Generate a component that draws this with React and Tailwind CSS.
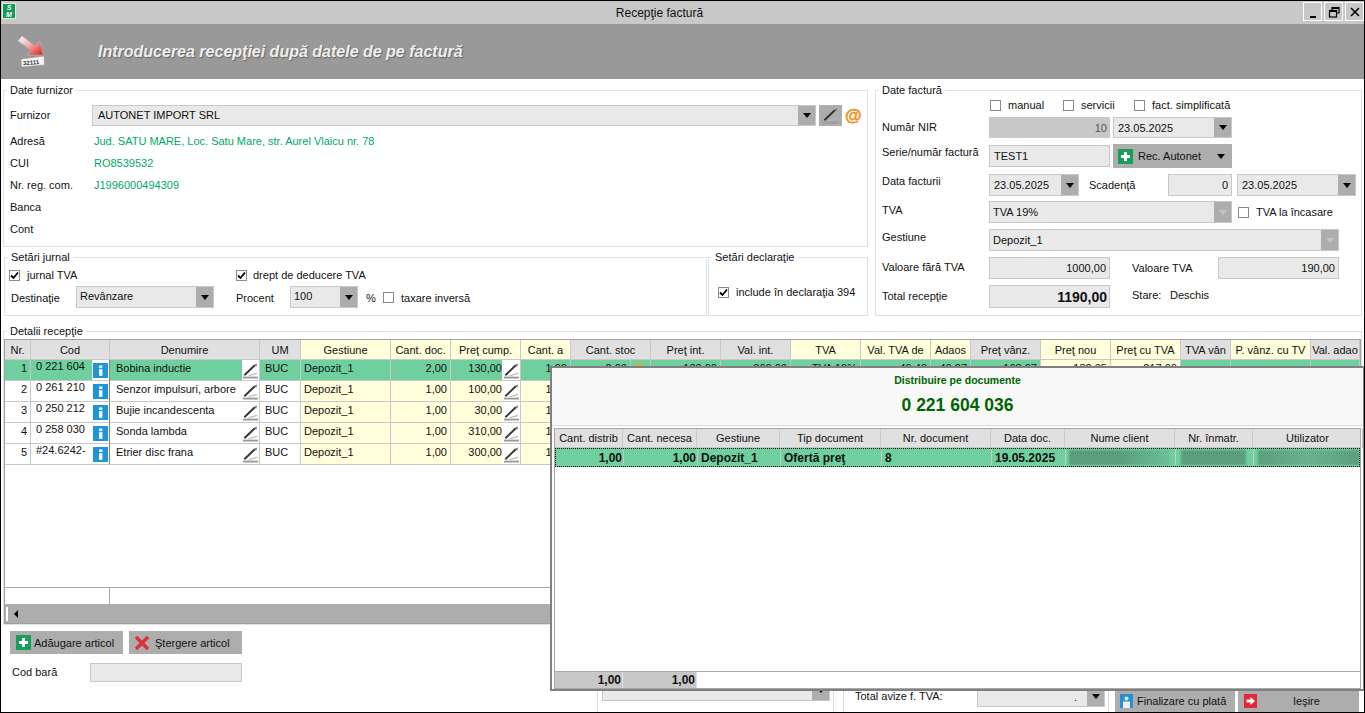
import React from "react";

const Tri = ({ muted }) => (
  <span className={`w-0 h-0 border-x-[4px] border-t-[5px] border-x-transparent ${muted ? "border-t-[#c4c4c4]" : "border-t-black"}`} />
);

const Combo = ({ className = "", text, muted, btn = "w-[17px]" }) => (
  <div className={`flex items-stretch bg-[#e9e9e9] border border-[#c8c8c8] shrink-0 ${className}`}>
    <span className="flex-1 pl-[3px] flex items-center whitespace-nowrap overflow-hidden">{text}</span>
    <span className={`bg-[#adadad] flex items-center justify-center shrink-0 ${btn}`}><Tri muted={muted} /></span>
  </div>
);

const Box = ({ className = "", children }) => (
  <div className={`flex items-center border border-[#c8c8c8] shrink-0 whitespace-nowrap ${className}`}>{children}</div>
);

const Check = ({ checked }) => (
  <span className="w-[11px] h-[11px] shrink-0 border border-[#8a8a8a] bg-white flex items-center justify-center">
    {checked && (
      <svg width="9" height="9" viewBox="0 0 9 9"><path d="M1 4.5 L3.5 7 L8 1.5" fill="none" stroke="#000" strokeWidth="1.8" /></svg>
    )}
  </span>
);

const Group = ({ title, className = "", children }) => (
  <fieldset className={`border border-[#dce3e8] ${className}`}>
    <legend className="ml-[3px] px-[3px] h-[14px] leading-[14px]">{title}</legend>
    {children}
  </fieldset>
);

const Pen = ({ size = 18 }) => (
  <svg width={size} height={size} viewBox="0 0 18 18">
    <path d="M2.5 14 L13.5 3.5" stroke="#333" strokeWidth="2" fill="none" />
    <path d="M13 3 L16 1.5 L15 5 Z" fill="#666" />
    <path d="M1 16.5 H17" stroke="#9a9a9a" strokeWidth="2" />
    <path d="M7 14.5 L16 12" stroke="#b8b8b8" strokeWidth="1.2" />
  </svg>
);

const Info = () => (
  <svg width="15" height="15" viewBox="0 0 15 15" className="shrink-0">
    <rect width="15" height="15" fill="#1c96d8" />
    <rect x="6" y="2.5" width="3.4" height="2.6" fill="#fff" />
    <rect x="6" y="6.2" width="3.4" height="6.6" fill="#fff" />
  </svg>
);

const Plus = () => (
  <svg width="15" height="15" viewBox="0 0 15 15" className="shrink-0">
    <rect width="15" height="15" fill="#17a05a" />
    <path d="M6 3h3v3h3v3H9v3H6V9H3V6h3z" fill="#fff" />
  </svg>
);

const COLS = "grid grid-cols-[26px_79px_150px_41px_90px_60px_70px_50px_80px_70px_70px_70px_70px_40px_70px_70px_70px_50px_80px_49px]";
const POPCOLS = "grid grid-cols-[68px_74px_83px_101px_110px_74px_110px_78px_110px]";

const heads = [
  ["Nr.", 0], ["Cod", 0], ["Denumire", 0], ["UM", 0], ["Gestiune", 1], ["Cant. doc.", 1], ["Preţ cump.", 1], ["Cant. a", 1],
  ["Cant. stoc", 0], ["Preţ int.", 0], ["Val. int.", 0], ["TVA", 1], ["Val. TVA de", 1], ["Adaos", 1], ["Preţ vânz.", 0],
  ["Preţ nou", 1], ["Preţ cu TVA", 1], ["TVA vân", 0], ["P. vânz. cu TV", 1], ["Val. adao", 0],
];

const rows = [
  ["1", "0 221 604", "Bobina inductie", "2,00", "130,00", "1,00"],
  ["2", "0 261 210", "Senzor impulsuri, arbore", "1,00", "100,00", "1,00"],
  ["3", "0 250 212", "Bujie incandescenta", "1,00", "30,00", "1,00"],
  ["4", "0 258 030", "Sonda lambda", "1,00", "310,00", "1,00"],
  ["5", "#24.6242-", "Etrier disc frana", "1,00", "300,00", "1,00"],
];

const cellLine = "border-r border-b border-[#c8c8c8] h-[21px] flex items-center whitespace-nowrap overflow-hidden";

const Row = ({ r, sel }) => {
  const white = sel ? "bg-[#6fcf9f]" : "bg-white";
  const cream = sel ? "bg-[#6fcf9f]" : "bg-[#ffffdc]";
  const tail = sel
    ? [["2,00", 0], ["130,00", 0], ["260,00", 0], ["TVA 19%", 0], ["49,40", 0], ["40,27", 0], ["168,97", 0], ["182,35", 1], ["217,00", 1], ["", 0], ["", 0], ["", 0]]
    : Array(12).fill(["", 0]);
  return (
    <div className={COLS}>
      <div className={`${cellLine} ${white} justify-end pr-[3px] pb-[4px]`}>{r[0]}</div>
      <div className={`${cellLine} ${white} border-r-[#808080] justify-between`}>
        <span className="pl-[5px] pb-[8px]">{r[1]}</span>
        <span className="bg-white h-full w-[17px] flex items-center justify-center"><Info /></span>
      </div>
      <div className={`${cellLine} ${white} justify-between pl-[6px]`}>
        <span className="pb-[5px]">{r[2]}</span>
        <span className="bg-white h-full w-[17px] flex items-center justify-center shrink-0"><Pen size={17} /></span>
      </div>
      <div className={`${cellLine} ${white} pl-[5px] pb-[4px]`}>BUC</div>
      <div className={`${cellLine} ${cream} pl-[3px] pb-[4px]`}>Depozit_1</div>
      <div className={`${cellLine} ${cream} justify-end pr-[3px] pb-[4px]`}>{r[3]}</div>
      <div className={`${cellLine} ${cream} justify-end`}>
        <span className="pb-[4px]">{r[4]}</span>
        <span className="bg-white h-full w-[18px] flex items-center justify-center shrink-0"><Pen size={17} /></span>
      </div>
      <div className={`${cellLine} ${cream} justify-end pr-[3px] pb-[4px]`}>{r[5]}</div>
      {tail.map((t, i) =>
        i === 0 ? (
          <div key={i} className={`${cellLine} ${white} justify-end`}>
            <span className="pb-[4px] pr-[3px]">{t[0]}</span>
            <span className="w-[20px] h-full border-l border-[#c8c8c8] shrink-0 flex items-start pt-[3px] pl-[3px]">
              {sel && <span className="w-[10px] h-[10px] rounded-full border-2 border-[#e8a820]" />}
            </span>
          </div>
        ) : (
          <div key={i} className={`${cellLine} ${t[1] ? "bg-[#ffffdc]" : i === 4 || i === 3 ? cream : white} justify-end pr-[3px] pb-[4px] ${i === 3 ? "justify-center" : ""}`}>{t[0]}</div>
        )
      )}
    </div>
  );
};

const Popup = () => (
  <div className="absolute left-[549px] top-[365px] w-[815px] h-[325px] bg-white border-2 border-[#808080] flex flex-col">
    <div className="h-[58px] bg-[#f8f8f8] border-b border-[#dcdcdc] flex flex-col items-center text-[#006400] font-bold shrink-0">
      <span className="text-[10.5px] leading-[12px] mt-[6px]">Distribuire pe documente</span>
      <span className="text-[17.5px] leading-[18px] mt-[10px]">0 221 604 036</span>
    </div>
    <div className="mx-[2px] mt-[2px] flex-1 flex flex-col border border-[#a8a8a8]">
      <div className={`${POPCOLS} bg-[#e0e0e0]`}>
        {["Cant. distrib", "Cant. necesa", "Gestiune", "Tip document", "Nr. document", "Data doc.", "Nume client", "Nr. înmatr.", "Utilizator"].map((h) => (
          <div key={h} className="h-[19px] border-r border-b border-[#c8c8c8] flex items-center justify-center whitespace-nowrap overflow-hidden">{h}</div>
        ))}
      </div>
      <div className={`${POPCOLS} bg-[#6fcf9f] border border-dotted border-black font-bold text-[12px] h-[19px]`}>
        <div className="flex items-center justify-end pr-[1px] border-r border-[#c8c8c8]">1,00</div>
        <div className="flex items-center justify-end pr-[1px] border-r border-[#c8c8c8]">1,00</div>
        <div className="flex items-center pl-[3px] border-r border-[#c8c8c8]">Depozit_1</div>
        <div className="flex items-center pl-[3px] border-r border-[#c8c8c8]">Ofertă preţ</div>
        <div className="flex items-center pl-[3px] border-r border-[#c8c8c8]">8</div>
        <div className="flex items-center pl-[3px] border-r border-[#c8c8c8]">19.05.2025</div>
        <div className="p-[1px] border-r border-[#c8c8c8] overflow-hidden"><div className="h-full bg-gradient-to-r from-[#5b9e7c] via-[#5b9e7c] to-[#6cc098] ml-[2px] mr-[4px] blur-[1px]" /></div>
        <div className="p-[1px] border-r border-[#c8c8c8] overflow-hidden"><div className="h-full bg-[#5b9e7c] ml-[4px] mr-[6px] blur-[1px]" /></div>
        <div className="p-[1px] overflow-hidden"><div className="h-full bg-gradient-to-r from-[#5b9e7c] via-[#68b28e] to-[#5b9e7c] ml-[3px] mr-[4px] blur-[1px]" /></div>
      </div>
      <div className="flex-1 bg-white" />
      <div className="flex h-[17px] border-t border-[#a8a8a8] font-bold text-[12px]">
        <div className="w-[68px] bg-[#c8c8c8] border-r border-[#e0e0e0] flex items-center justify-end pr-[1px]">1,00</div>
        <div className="w-[74px] bg-[#c8c8c8] border-r border-[#e0e0e0] flex items-center justify-end pr-[1px]">1,00</div>
        <div className="flex-1 bg-white" />
      </div>
    </div>
  </div>
);

export default function App() {
  return (
    <div className="relative w-[1365px] h-[713px] border border-black bg-white overflow-hidden flex flex-col text-[11px] leading-[14px] text-[#111] [font-family:Liberation_Sans,Arial,sans-serif]">
      {/* Title bar */}
      <div className="h-[23px] bg-[#c8c8c8] flex shrink-0">
        <div className="w-[14px] h-[16px] ml-[1px] mt-[2px] bg-[#16995a] border border-[#d8f0e0] text-white font-bold italic text-[7px] leading-[7px] flex flex-col items-center justify-center">
          <span>S</span><span>M</span>
        </div>
        <div className="flex-1 text-center text-[12px] leading-[24px]">Recepţie factură</div>
        <div className="flex gap-[2px] mt-[1px] h-[19px]">
          {[
            <path key="a" d="M5 13 H11" stroke="#000" strokeWidth="2" />,
            <g key="b" fill="none" stroke="#000" strokeWidth="1.2"><path d="M6 6 V3.5 H13 V9 H10.5" /><rect x="3.5" y="6.5" width="7" height="6.5" /><path d="M3.5 7.5 H10.5 M6 4.5 H13" /></g>,
            <path key="c" d="M4 4 L12 12 M12 4 L4 12" stroke="#000" strokeWidth="1.6" fill="none" />,
          ].map((p, i) => (
            <div key={i} className="w-[19px] h-[19px] border border-white bg-[#c8c8c8] flex items-center justify-center">
              <svg width="16" height="16" viewBox="0 0 16 16">{p}</svg>
            </div>
          ))}
        </div>
      </div>

      {/* Header */}
      <div className="h-[55px] bg-[#999999] flex items-center shrink-0">
        <svg width="32" height="34" viewBox="0 0 32 34" className="ml-[15px] shrink-0">
          <defs>
            <linearGradient id="arw" x1="0" y1="0" x2="1" y2="1">
              <stop offset="0" stopColor="#ffffff" />
              <stop offset="0.45" stopColor="#f4b0b0" />
              <stop offset="1" stopColor="#e01818" />
            </linearGradient>
          </defs>
          <path d="M2 6 L6 1 L19 11 L24 6 L27 20 L11 20 L15 15 Z" fill="url(#arw)" stroke="#b8b8b8" strokeWidth="0.5" />
          <path d="M5 24 L28 21 L28.5 30 L5.5 32 Z" fill="#f4f4f4" stroke="#888" strokeWidth="0.5" />
          <text x="7" y="29.5" fontSize="6" fontWeight="700" fill="#333" transform="rotate(-5 16 27)">32111</text>
        </svg>
        <span className="ml-[50px] text-[16px] leading-[20px] font-bold italic text-[#eeeeee] whitespace-nowrap [text-shadow:1px_1px_1px_#666]">Introducerea recepţiei după datele de pe factură</span>
      </div>

      {/* Upper forms */}
      <div className="flex pl-[2px] shrink-0">
        <div className="w-[865px] shrink-0 pt-[4px]">
          <Group title="Date furnizor" className="h-[164px]">
            <div className="pl-[6px] pt-[8px]">
              <div className="flex items-center h-[21px] mb-[4px]">
                <span className="w-[82px] pb-[2px]">Furnizor</span>
                <Combo className="w-[724px] h-[21px]" text={<span className="pl-[2px] pb-[2px]">AUTONET IMPORT SRL</span>} />
                <span className="ml-[3px] w-[23px] h-[21px] bg-[#adadad] flex items-center justify-center"><Pen size={17} /></span>
                <span className="ml-[3px] text-[#f09020] font-bold text-[17px] leading-[20px] [-webkit-text-stroke:0.5px_#f09020]">@</span>
              </div>
              {[
                ["Adresă", "Jud. SATU MARE, Loc. Satu Mare, str. Aurel Vlaicu nr. 78"],
                ["CUI", "RO8539532"],
                ["Nr. reg. com.", "J1996000494309"],
                ["Banca", ""],
                ["Cont", ""],
              ].map(([a, b]) => (
                <div key={a} className="flex items-center h-[22px]">
                  <span className="w-[84px]">{a}</span>
                  <span className="text-[#00a868]">{b}</span>
                </div>
              ))}
            </div>
          </Group>
          <div className="flex mt-[3px] pl-[1px]">
            <Group title="Setări jurnal" className="w-[703px] h-[66px] shrink-0">
              <div className="pl-[4px] pt-[5px]">
                <div className="flex items-center h-[12px]">
                  <span className="w-[227px] flex items-center gap-[7px]"><Check checked />jurnal TVA</span>
                  <span className="flex items-center gap-[6px]"><Check checked />drept de deducere TVA</span>
                </div>
                <div className="flex items-center h-[22px] mt-[5px] pl-[2px]">
                  <span className="w-[65px] shrink-0 pt-[2px]">Destinaţie</span>
                  <Combo className="w-[138px] h-[22px]" text={<span className="pb-[3px]">Revânzare</span>} />
                  <span className="ml-[22px] w-[54px] shrink-0 pt-[2px]">Procent</span>
                  <Combo className="w-[68px] h-[22px]" text={<span className="pb-[3px]">100</span>} />
                  <span className="ml-[8px] w-[17px] shrink-0 pt-[2px]">%</span>
                  <Check />
                  <span className="ml-[7px] pt-[2px]">taxare inversă</span>
                </div>
              </div>
            </Group>
            <Group title="Setări declaraţie" className="w-[160px] ml-[1px] h-[66px] shrink-0">
              <div className="pl-[9px] pt-[21px] flex items-center gap-[7px] whitespace-nowrap"><Check checked />include în declaraţia 394</div>
            </Group>
          </div>
        </div>

        <div className="ml-[7px] w-[487px] shrink-0 pt-[4px]">
          <Group title="Date factură" className="h-[233px]">
            <div className="pl-[6px] pt-[2px] flex flex-col gap-[6px]">
              <div className="flex items-center h-[12px] pl-[108px]">
                <Check /><span className="ml-[7px] w-[55px]">manual</span>
                <Check /><span className="ml-[7px] w-[53px]">servicii</span>
                <Check /><span className="ml-[7px]">fact. simplificată</span>
              </div>
              <div className="flex items-center h-[21px]">
                <span className="w-[107px] pb-[2px]">Număr NIR</span>
                <Box className="w-[121px] h-[21px] bg-[#c8c8c8] justify-end pr-[2px] text-[#555]">10</Box>
                <Combo className="w-[119px] h-[21px] ml-[3px]" text={<span className="pl-[1px]">23.05.2025</span>} />
              </div>
              <div className="flex items-center h-[24px]">
                <span className="w-[107px] pb-[8px]">Serie/număr factură</span>
                <Box className="w-[121px] h-[22px] bg-[#e9e9e9] pl-[4px]">TEST1</Box>
                <div className="ml-[3px] w-[119px] h-[24px] bg-[#adadad] flex items-center pl-[5px]">
                  <Plus />
                  <span className="ml-[5px] w-[79px]">Rec. Autonet</span>
                  <Tri />
                </div>
              </div>
              <div className="flex items-center h-[22px]">
                <span className="w-[107px] pb-[9px]">Data facturii</span>
                <Combo className="w-[90px] h-[22px]" text={<span className="pl-[1px]">23.05.2025</span>} />
                <span className="ml-[10px] w-[79px]">Scadenţă</span>
                <Box className="w-[64px] h-[22px] bg-[#e9e9e9] justify-end pr-[3px]">0</Box>
                <Combo className="w-[119px] h-[22px] ml-[5px]" text={<span className="pl-[1px]">23.05.2025</span>} />
              </div>
              <div className="flex items-center h-[22px] -mt-px">
                <span className="w-[107px] pb-[4px]">TVA</span>
                <Combo className="w-[243px] h-[22px]" muted text="TVA 19%" />
                <span className="ml-[6px]"><Check /></span>
                <span className="ml-[7px] pb-[1px]">TVA la încasare</span>
              </div>
              <div className="flex items-center h-[22px]">
                <span className="w-[107px] pb-[7px]">Gestiune</span>
                <Combo className="w-[350px] h-[22px]" muted text="Depozit_1" />
              </div>
              <div className="flex items-center h-[22px]">
                <span className="w-[107px] pb-[2px]">Valoare fără TVA</span>
                <Box className="w-[121px] h-[22px] bg-[#e9e9e9] justify-end pr-[3px]">1000,00</Box>
                <span className="ml-[22px] w-[86px]">Valoare TVA</span>
                <Box className="w-[121px] h-[22px] bg-[#e9e9e9] justify-end pr-[3px]">190,00</Box>
              </div>
              <div className="flex items-center h-[23px]">
                <span className="w-[107px] pb-[2px]">Total recepţie</span>
                <Box className="w-[121px] h-[23px] bg-[#e9e9e9] justify-end pr-[2px] font-bold text-[14px]">1190,00</Box>
                <span className="ml-[22px] w-[38px] pb-[3px]">Stare:</span>
                <span className="pb-[3px]">Deschis</span>
              </div>
            </div>
          </Group>
        </div>
      </div>

      {/* Details grid */}
      <div className="pl-[2px] pt-[8px] shrink-0">
        <Group title="Detalii recepţie" className="w-[1359px] h-[301px]">
          <div className="mt-[1px] w-[1357px] h-[285px] border border-[#a0a0a0] flex flex-col overflow-hidden">
            <div className={COLS}>
              {heads.map(([h, c]) => (
                <div key={h} className={`h-[20px] border-r border-b border-[#c8c8c8] flex items-center justify-center whitespace-nowrap overflow-hidden ${c ? "bg-[#ffffdc]" : "bg-[#e0e0e0]"}`}>{h}</div>
              ))}
            </div>
            {rows.map((r, i) => <Row key={r[0]} r={r} sel={i === 0} />)}
            <div className="flex-1 bg-white" />
            <div className="flex h-[17px] border-t border-[#a8a8a8] shrink-0">
              <div className="w-[105px] border-r border-[#a8a8a8]" />
            </div>
            <div className="h-[19px] bg-[#adadad] flex items-center shrink-0">
              <span className="w-[2px] h-[14px] bg-white ml-[1px]" />
              <span className="ml-[6px] w-0 h-0 border-y-[4px] border-r-[4px] border-y-transparent border-r-black" />
            </div>
          </div>
        </Group>
      </div>

      {/* Bottom */}
      <div className="flex-1 flex min-h-0">
        <div className="w-[596px] shrink-0 pl-[9px] pt-[6px]">
          <div className="flex gap-[6px]">
            <div className="w-[113px] h-[23px] bg-[#adadad] flex items-center pl-[6px] gap-[3px] whitespace-nowrap"><Plus />Adăugare articol</div>
            <div className="w-[113px] h-[23px] bg-[#adadad] flex items-center pl-[5px] gap-[5px] whitespace-nowrap">
              <svg width="16" height="16" viewBox="0 0 16 16" className="shrink-0"><path d="M2 2 L14 14 M14 2 L2 14" stroke="#e0303a" strokeWidth="3.4" fill="none" /></svg>
              Ştergere articol
            </div>
          </div>
          <div className="flex items-center mt-[9px] pl-[2px] h-[19px]">
            <span className="w-[78px] pb-[1px]">Cod bară</span>
            <Box className="w-[152px] h-[19px] bg-[#e9e9e9]" />
          </div>
        </div>
        <div className="flex-1 flex border-l border-[#dcdcdc]">
          <div className="w-[236px] shrink-0 flex flex-col justify-end pb-[11px] pl-[4px] border-r border-[#dcdcdc]">
            <Combo className="w-[228px] h-[22px]" text="" />
          </div>
          <div className="w-[266px] shrink-0 ml-[9px] border-l border-r border-[#dcdcdc] flex items-end pb-[5px] pl-[11px]">
            <span className="w-[122px] pb-[4px]">Total avize f. TVA:</span>
            <Combo className="w-[128px] h-[21px]" text={<span className="w-full text-right pr-[10px]">.</span>} />
          </div>
          <div className="flex items-end gap-[3px] ml-[6px]">
            <div className="w-[120px] h-[22px] bg-[#adadad] flex items-center pl-[5px] gap-[4px] whitespace-nowrap">
              <svg width="13" height="14" viewBox="0 0 13 14" className="shrink-0">
                <rect width="13" height="14" fill="#2a8fd0" />
                <circle cx="6.5" cy="4.5" r="2" fill="#d8e8f0" />
                <rect x="3" y="7.5" width="7" height="6.5" fill="#f0f0f0" />
              </svg>
              Finalizare cu plată
            </div>
            <div className="w-[121px] h-[22px] bg-[#adadad] flex items-center pl-[6px] whitespace-nowrap">
              <svg width="13" height="14" viewBox="0 0 13 14" className="shrink-0">
                <rect width="13" height="14" fill="#e02838" />
                <path d="M2.5 5.5 H6.5 V3 L11 7 L6.5 11 V8.5 H2.5 Z" fill="#fff" />
              </svg>
              <span className="ml-[36px]">Ieşire</span>
            </div>
          </div>
        </div>
      </div>

      <Popup />
    </div>
  );
}
